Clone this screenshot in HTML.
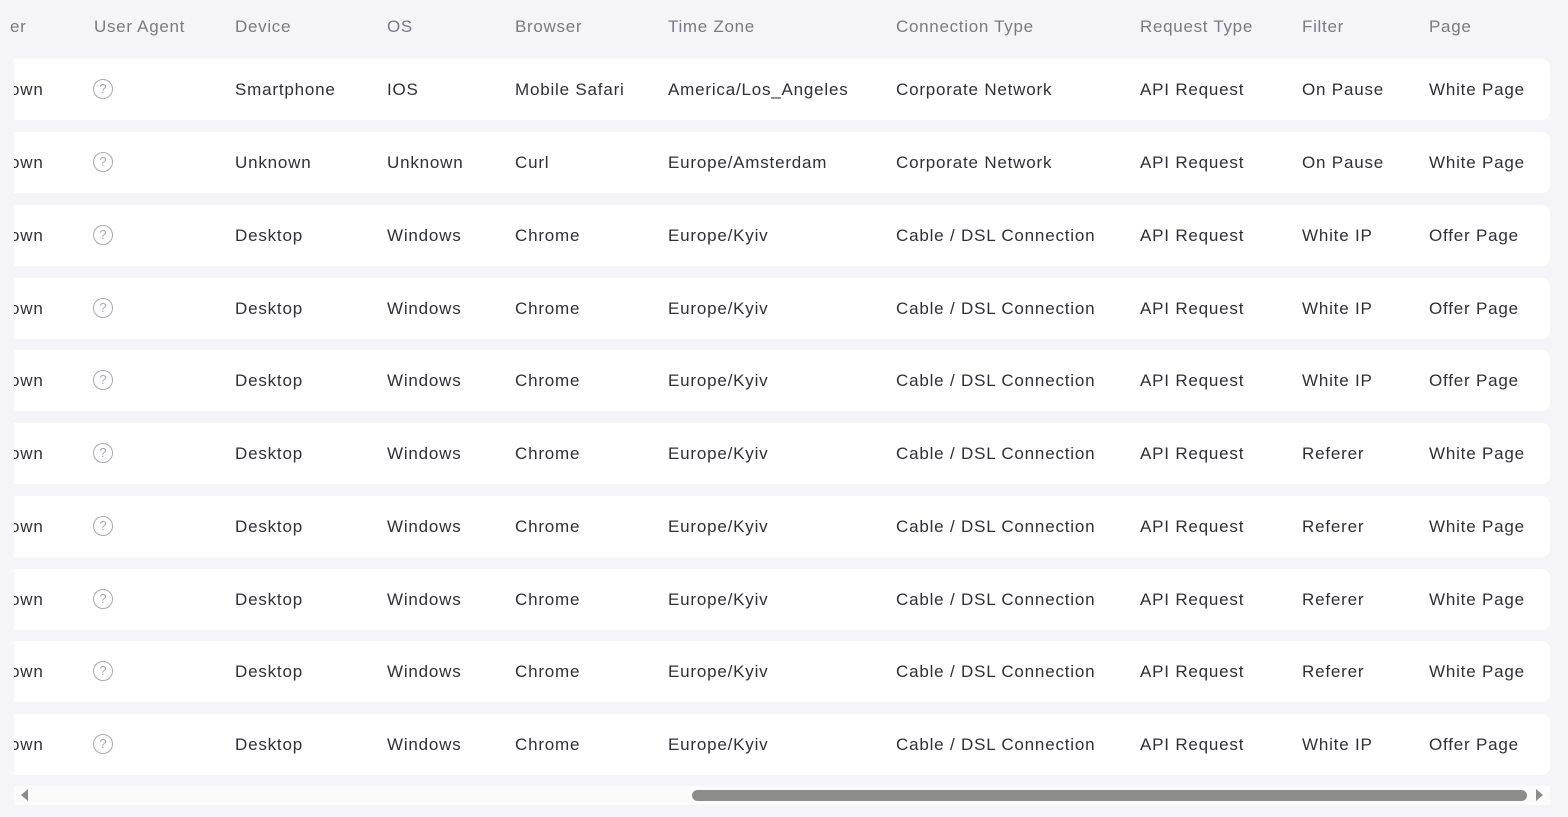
<!DOCTYPE html>
<html><head><meta charset="utf-8"><style>
*{margin:0;padding:0;box-sizing:border-box}
body{width:1568px;height:817px;background:#f4f4f9;font-family:"Liberation Sans",sans-serif;position:relative;overflow:hidden}
.h{position:absolute;top:17px;font-size:17px;color:#7a7a85;white-space:nowrap;letter-spacing:0.7px}
.row{position:absolute;left:14px;width:1536px;height:61px;background:#fff;border-radius:0 8px 8px 0;overflow:hidden}
.c{position:absolute;top:21px;font-size:17px;color:#2f2f38;white-space:nowrap;letter-spacing:0.8px}
.ic{position:absolute;left:79px;top:20px;width:20px;height:20px;border:1.5px solid #a8a8b2;border-radius:50%;color:#a8a8b2;font-size:13px;text-align:center;line-height:17px}
</style></head><body>
<div class="h" style="left:10px">er</div>
<div class="h" style="left:94px">User Agent</div>
<div class="h" style="left:235px">Device</div>
<div class="h" style="left:387px">OS</div>
<div class="h" style="left:515px">Browser</div>
<div class="h" style="left:668px">Time Zone</div>
<div class="h" style="left:896px">Connection Type</div>
<div class="h" style="left:1140px">Request Type</div>
<div class="h" style="left:1302px">Filter</div>
<div class="h" style="left:1429px">Page</div>
<div id="rows"></div>
<div style="position:absolute;left:14px;top:786px;width:1536px;height:19px;background:#fbfbfb"></div>
<div style="position:absolute;left:21px;top:789px;width:0;height:0;border-top:6px solid transparent;border-bottom:6px solid transparent;border-right:7px solid #8c8c8c"></div>
<div style="position:absolute;left:692px;top:790px;width:835px;height:11px;background:#8c8c8c;border-radius:6px"></div>
<div style="position:absolute;left:1536px;top:789px;width:0;height:0;border-top:6px solid transparent;border-bottom:6px solid transparent;border-left:7px solid #8c8c8c"></div>
<script>
var d=[["Smartphone","IOS","Mobile Safari","America/Los_Angeles","Corporate Network","On Pause","White Page"],
["Unknown","Unknown","Curl","Europe/Amsterdam","Corporate Network","On Pause","White Page"]];
var f=["White IP","White IP","White IP","Referer","Referer","Referer","Referer","White IP"];
for(var i=0;i<8;i++)d.push(["Desktop","Windows","Chrome","Europe/Kyiv","Cable / DSL Connection",f[i],f[i]=="White IP"?"Offer Page":"White Page"]);
var tops=[59,132,205,278,350,423,496,569,641,714],xs=[221,373,501,654,882,1288,1415],h="";
for(var i=0;i<10;i++){var r=d[i];h+='<div class="row" style="top:'+tops[i]+'px"><div class="c" style="left:-4px">own</div><div class="ic">?</div>';
for(var j=0;j<7;j++)h+='<div class="c" style="left:'+xs[j]+'px">'+r[j]+'</div>';
h+='<div class="c" style="left:1126px">API Request</div></div>';}
document.getElementById("rows").innerHTML=h;
</script>
</body></html>
